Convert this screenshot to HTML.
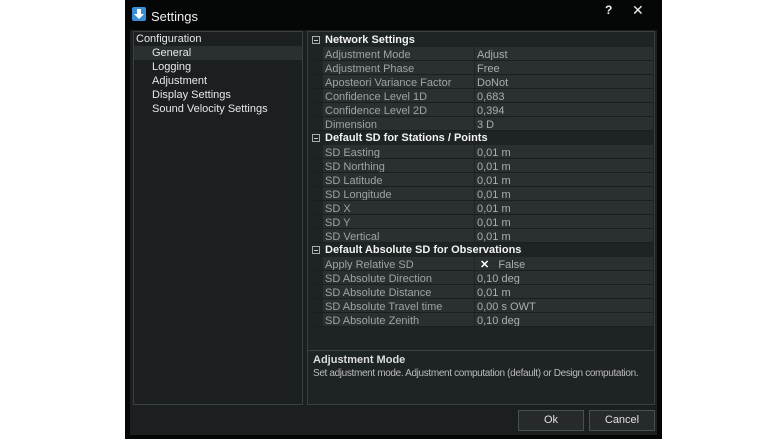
<!DOCTYPE html>
<html><head><style>
*{margin:0;padding:0;box-sizing:border-box}
body{width:780px;height:440px;background:#fff;position:relative;overflow:hidden;font-family:"Liberation Sans",sans-serif;font-size:11px;color:#c4c8c8}
.win{position:absolute;left:125px;top:0;width:537px;height:439px;background:#050606}
.title{position:absolute;left:26px;top:9px;color:#eee;font-size:13px}
.icon{position:absolute;left:7px;top:7px;width:14px;height:14px;background:#3a8ed6;border-radius:2px}
.client{position:absolute;left:5px;top:30px;width:527px;height:405px;background:#1b1f20}
.left{position:absolute;left:8px;top:31px;width:170px;height:374px;border:1px solid #3a3f40;background:#1b1f20}
.left div{height:14px;line-height:14px;color:#e6e8e8;white-space:nowrap}
.right{position:absolute;left:182px;top:31px;width:348px;height:374px;border:1px solid #3a3f40;background:#1e2324}
.grid{position:absolute;left:1px;top:1px;width:344px}
.row{height:14px;line-height:16px;position:relative;border-bottom:1px solid #1a1e1f}
.row .k{position:absolute;left:14px;width:151px;height:13px;background:#2a2f30;padding-left:2px;color:#9ea3a4;overflow:hidden}
.row .v{position:absolute;left:166px;right:0;height:13px;background:#2a2f30;padding-left:2px;color:#a9aeae;overflow:hidden}
.hdr{height:14px;line-height:14px;position:relative;background:#1e2324;font-weight:bold;color:#f2f2f2}
.hdr span{position:absolute;left:16px}
.hdr i{position:absolute;left:3px;top:3px;width:8px;height:8px;border:1px solid #aaa;font-style:normal}
.hdr i:after{content:"";position:absolute;left:1px;top:3px;width:4px;height:1px;background:#ccc}
.desc{position:absolute;left:0;top:318px;width:346px;height:54px;border-top:1px solid #3a3f40;background:#1e2324;padding:3px 5px;white-space:nowrap}
.btn{position:absolute;top:410px;width:66px;height:21px;border:1px solid #4a4f50;background:#262a2b;color:#e0e0e0;text-align:center;line-height:19px;font-size:11px}
</style></head><body>
<div class="win">
<div class="icon"><svg width="14" height="14"><path d="M5 2h4v5h3l-5 5-5-5h3z" fill="#fff"/></svg></div>
<div class="title">Settings</div>
<div style="position:absolute;left:480px;top:3px;color:#eee;font-weight:bold;font-size:12px">?</div>
<div style="position:absolute;left:507px;top:2px;color:#eee;font-size:14px">✕</div>
<div class="client"></div>
<div class="left">
<div style="padding-left:2px">Configuration</div>
<div style="padding-left:18px;background:#2a2f30">General</div>
<div style="padding-left:18px">Logging</div>
<div style="padding-left:18px">Adjustment</div>
<div style="padding-left:18px">Display Settings</div>
<div style="padding-left:18px">Sound Velocity Settings</div>
</div>
<div class="right"><div class="grid">
<div class="hdr"><i></i><span>Network Settings</span></div>
<div class="row"><div class="k">Adjustment Mode</div><div class="v">Adjust</div></div>
<div class="row"><div class="k">Adjustment Phase</div><div class="v">Free</div></div>
<div class="row"><div class="k">Aposteori Variance Factor</div><div class="v">DoNot</div></div>
<div class="row"><div class="k">Confidence Level 1D</div><div class="v">0,683</div></div>
<div class="row"><div class="k">Confidence Level 2D</div><div class="v">0,394</div></div>
<div class="row"><div class="k">Dimension</div><div class="v">3 D</div></div>
<div class="hdr"><i></i><span>Default SD for Stations / Points</span></div>
<div class="row"><div class="k">SD Easting</div><div class="v">0,01 m</div></div>
<div class="row"><div class="k">SD Northing</div><div class="v">0,01 m</div></div>
<div class="row"><div class="k">SD Latitude</div><div class="v">0,01 m</div></div>
<div class="row"><div class="k">SD Longitude</div><div class="v">0,01 m</div></div>
<div class="row"><div class="k">SD X</div><div class="v">0,01 m</div></div>
<div class="row"><div class="k">SD Y</div><div class="v">0,01 m</div></div>
<div class="row"><div class="k">SD Vertical</div><div class="v">0,01 m</div></div>
<div class="hdr"><i></i><span>Default Absolute SD for Observations</span></div>
<div class="row"><div class="k">Apply Relative SD</div><div class="v"><b style="color:#fff;margin-left:3px">✕</b>&nbsp;&nbsp;&nbsp;False</div></div>
<div class="row"><div class="k">SD Absolute Direction</div><div class="v">0,10 deg</div></div>
<div class="row"><div class="k">SD Absolute Distance</div><div class="v">0,01 m</div></div>
<div class="row"><div class="k">SD Absolute Travel time</div><div class="v">0,00 s OWT</div></div>
<div class="row"><div class="k">SD Absolute Zenith</div><div class="v">0,10 deg</div></div>
</div>
<div class="desc"><div style="font-weight:bold;color:#ddd">Adjustment Mode</div><div style="color:#bbb;font-size:10px;letter-spacing:-0.35px;margin-top:2px">Set adjustment mode. Adjustment computation (default) or Design computation.</div></div>
</div>
<div class="btn" style="left:393px">Ok</div>
<div class="btn" style="left:464px">Cancel</div>
</div>
</body></html>
